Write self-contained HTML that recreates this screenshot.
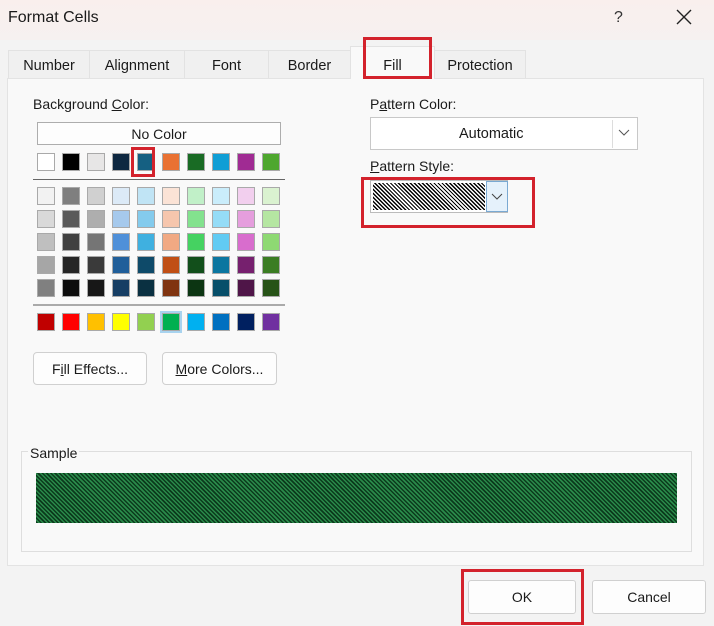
<!DOCTYPE html>
<html><head><style>
*{margin:0;padding:0;box-sizing:border-box}
body{width:714px;height:626px;overflow:hidden;background:#f3f3f3;font-family:"Liberation Sans",sans-serif;color:#1a1a1a;position:relative}
.a{position:absolute}
.title{left:0;top:0;width:714px;height:40px;background:linear-gradient(#f9efed,#f6f1f0)}
.tab{position:absolute;top:50px;height:28px;border:1px solid #e2e2e2;border-bottom:none;background:#f0f0f0;font-size:14.5px;text-align:center;line-height:30px}
.panel{left:7px;top:78px;width:697px;height:488px;background:#f9f9f9;border:1px solid #e3e3e3}
.lbl{font-size:14px}
.sw{position:absolute;width:18px;height:18px;border:1px solid #a9a9a9}
.btn{position:absolute;background:#fdfdfd;border:1px solid #d0d0d0;border-radius:4px;font-size:14px;text-align:center}
.red{position:absolute;border:3px solid #d3222c}
.hatch{background:repeating-linear-gradient(45deg,#000 0 1.3px,#fff 1.3px 2.8px)}
</style></head><body>
<div class="a title"></div>
<div class="a" style="left:8px;top:9px;font-size:16px">Format Cells</div>
<div class="a" style="left:614px;top:9px;font-size:16px;color:#333">?</div>
<svg class="a" style="left:676px;top:9px" width="16" height="16"><path d="M1 1L15 15M15 1L1 15" stroke="#222" stroke-width="1.4"/></svg>

<div class="tab" style="left:8px;width:82px">Number</div>
<div class="tab" style="left:89px;width:96px">Alignment</div>
<div class="tab" style="left:184px;width:85px">Font</div>
<div class="tab" style="left:268px;width:83px">Border</div>
<div class="tab" style="left:434px;width:92px">Protection</div>
<div class="a panel"></div>
<div class="tab" style="left:350px;top:46px;width:85px;height:33px;background:#f9f9f9;line-height:38px">Fill</div>
<div class="red" style="left:363px;top:37px;width:69px;height:42px"></div>

<div class="a lbl" style="left:33px;top:96px">Background <u>C</u>olor:</div>
<div class="a" style="left:37px;top:122px;width:244px;height:23px;border:1px solid #adadad;background:#fdfdfd;font-size:14px;text-align:center;line-height:22px">No Color</div>
<div class="a" style="left:33px;top:179px;width:252px;height:1px;background:#666"></div>
<div class="a" style="left:33px;top:304px;width:252px;height:2px;background:#aaa"></div>
<div id="g"></div>

<div class="btn" style="left:33px;top:352px;width:114px;height:33px;line-height:32px">F<u>i</u>ll Effects...</div>
<div class="btn" style="left:162px;top:352px;width:115px;height:33px;line-height:32px"><u>M</u>ore Colors...</div>

<div class="a lbl" style="left:370px;top:96px">P<u>a</u>ttern Color:</div>
<div class="a" style="left:370px;top:117px;width:268px;height:33px;border:1px solid #c8c8c8;background:#fff;font-size:14.5px;line-height:32px;padding-left:88px">Automatic</div>
<div class="a" style="left:612px;top:120px;width:24px;height:28px;border-left:1px solid #ddd"></div>
<svg class="a" style="left:618px;top:129px" width="12" height="8"><path d="M1 1L6 6L11 1" fill="none" stroke="#555"/></svg>
<div class="a lbl" style="left:370px;top:158px"><u>P</u>attern Style:</div>
<div class="a" style="left:370px;top:180px;width:138px;height:33px;border:1px solid #bbb;background:#fff"></div>
<div class="a hatch" style="left:373px;top:183px;width:112px;height:27px"></div>
<div class="a" style="left:486px;top:181px;width:22px;height:31px;background:#e5f1fb;border:1px solid #7aa9d2"></div>
<svg class="a" style="left:491px;top:193px" width="12" height="8"><path d="M1 1L6 6L11 1" fill="none" stroke="#444"/></svg>
<div class="red" style="left:361px;top:177px;width:174px;height:51px"></div>

<div class="a" style="left:21px;top:451px;width:671px;height:101px;border:1px solid #dedede"></div>
<div class="a lbl" style="left:28px;top:445px;background:#f9f9f9;padding:0 2px">Sample</div>
<div class="a" style="left:36px;top:473px;width:641px;height:50px;background:repeating-linear-gradient(45deg,#0b3a1c 0 1.5px,#2a8a4a 1.5px 3px)"></div>

<div class="btn" style="left:468px;top:580px;width:108px;height:34px;line-height:33px;border-radius:3px">OK</div>
<div class="btn" style="left:592px;top:580px;width:114px;height:34px;line-height:33px;border-radius:3px">Cancel</div>
<div class="red" style="left:461px;top:569px;width:123px;height:56px"></div>

<div class="red" style="left:131px;top:147px;width:24px;height:30px;border-width:3px"></div>
<script>
var rows=[
[153,["#ffffff","#000000","#e7e6e6","#0e2841","#156082","#e97132","#196b24","#0f9ed5","#a02b93","#4ea72e"]],
[187,["#f2f2f2","#7f7f7f","#d0d0d0","#dceaf7","#c0e4f5","#fbe3d6","#c1f0c8","#caedfb","#f2cfee","#daf2d0"]],
[210,["#d9d9d9","#595959","#aeaeae","#a6c9ec","#84cbed","#f6c6ad","#83e28e","#95dcf7","#e59edd","#b5e6a2"]],
[233,["#bfbfbf","#404040","#757575","#4f90d9","#3fb0e0","#f1a983","#45d261","#61cbf3","#d86dcd","#8ed973"]],
[256,["#a6a6a6","#262626","#3a3a3a","#215f9a","#0e4a69","#c04f15","#124f1b","#0b76a0","#76206e","#3b7d23"]],
[279,["#808080","#0d0d0d","#171717","#163e64","#0a3041","#803410","#0c3512","#074f6a","#4f1548","#275317"]],
[313,["#c00000","#ff0000","#ffc000","#ffff00","#92d050","#00b050","#00b0f0","#0070c0","#002060","#7030a0"]]];
var h="";rows.forEach(function(r){r[1].forEach(function(c,i){h+='<div class="sw" style="left:'+(37+i*25)+'px;top:'+r[0]+'px;background:'+c+(r[0]==313&&i==5?';outline:2px solid #a8d3ef':'')+'"></div>'})});
document.getElementById("g").innerHTML=h;
</script>
</body></html>
